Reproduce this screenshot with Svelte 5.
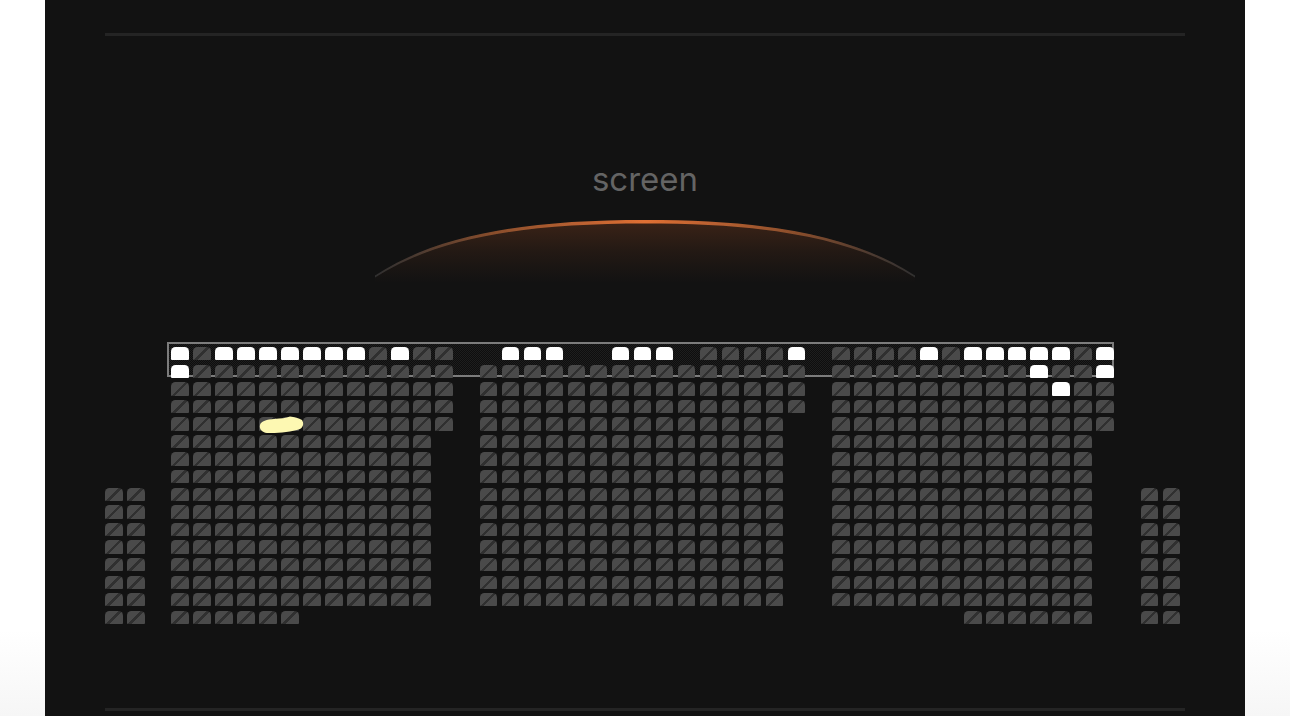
<script lang="ts">
  // s = taken (white), . = free (dark), _ = no seat
  function fill(ch: string, n: number) {
    return ch.repeat(n);
  }

  const side = Array(8).fill(fill(".", 2));

  const blockA = [
    "s.sssssss.s..",
    "s............",
    ".............",
    ".............",
    ".............",
    ...Array(10).fill(fill(".", 12) + "_"),
    fill(".", 6) + fill("_", 7),
  ];

  const blockB = [
    "_sss__sss_....s",
    ".".repeat(15),
    ".".repeat(15),
    ".".repeat(15),
    ...Array(11).fill(fill(".", 14) + "_"),
  ];

  const blockC = [
    "....s.sssss.s",
    ".........s..s",
    "..........s..",
    ".............",
    ".............",
    ...Array(10).fill(fill(".", 12) + "_"),
    fill("_", 6) + fill(".", 6) + "_",
  ];

  const blocks = [
    { rows: side, side: true },
    { rows: blockA, side: false },
    { rows: blockB, side: false },
    { rows: blockC, side: false },
    { rows: side, side: true },
  ];
</script>

<div class="page">
  <main class="panel">
    <hr class="rule" />

    <section class="screen">
      <h2>screen</h2>
      <svg class="arc" width="570" height="70" viewBox="0 0 570 70" aria-hidden="true">
        <defs>
          <linearGradient id="glow" x1="0" y1="0" x2="0" y2="1">
            <stop offset="0" stop-color="#e0672a" stop-opacity="0.2" />
            <stop offset="0.5" stop-color="#e0672a" stop-opacity="0.08" />
            <stop offset="1" stop-color="#e0672a" stop-opacity="0" />
          </linearGradient>
          <linearGradient id="edge" x1="0" y1="0" x2="1" y2="0">
            <stop offset="0" stop-color="#3c3c3c" stop-opacity="0.7" />
            <stop offset="0.08" stop-color="#4c3a30" />
            <stop offset="0.22" stop-color="#8a4e2c" />
            <stop offset="0.5" stop-color="#e07034" />
            <stop offset="0.78" stop-color="#8a4e2c" />
            <stop offset="0.92" stop-color="#4c3a30" />
            <stop offset="1" stop-color="#3c3c3c" stop-opacity="0.7" />
          </linearGradient>
          <filter id="soft" x="-5%" y="-20%" width="110%" height="140%">
            <feGaussianBlur stdDeviation="0.6" />
          </filter>
        </defs>
        <path d="M15 57 C80 14 170 2 285 2 C400 2 490 14 555 57 L555 64 L15 64 Z" fill="url(#glow)" />
        <path d="M15 56.500 C80 14 170 1 285 1 C400 1 490 14 555 56.500 L555 58.500 C490 17 400 4.500 285 4.500 C170 4.500 80 17 15 58.500 Z" fill="url(#edge)" filter="url(#soft)" />
      </svg>
    </section>

    <section class="map">
      <div class="selection"></div>
      {#each blocks as block}
        <div class="block" class:side={block.side}>
          {#each block.rows as row}
            <div class="row">
              {#each row.split("") as c}
                <span class="seat" class:taken={c === "s"} class:none={c === "_"}></span>
              {/each}
            </div>
          {/each}
        </div>
      {/each}
      <svg class="mark" width="45" height="18" viewBox="0 0 45 18" aria-hidden="true">
        <path d="M1 9 C2 5 8 3.500 15 3 C22 2.500 27 2 31 .5 C35 1 40 2 43 4 C45 7 44.500 11 41 13 C32 16 18 17.500 8 17 C3 16.500 0 13 1 9 Z" fill="#fdf8b2" />
      </svg>
    </section>

    <hr class="rule bottom" />
  </main>
</div>

<style>
  :global(body) {
    background: #fff;
  }

  .page {
    height: 716px;
    overflow: hidden;
    background: linear-gradient(180deg, #fff 88%, #f6f6f6 100%);
  }

  .panel {
    box-sizing: border-box;
    width: 1200px;
    height: 716px;
    margin: 0 auto;
    padding: 33px 60px 0;
    background: #121212;
    font-family: Inter, "Liberation Sans", sans-serif;
  }

  .rule {
    height: 3px;
    margin: 0;
    border: 0;
    background: #242424;
  }

  .rule.bottom {
    margin-top: 84px;
  }

  .screen {
    display: flex;
    flex-direction: column;
    align-items: center;
    padding-top: 122px;
  }

  .screen h2 {
    margin: 0;
    font-size: 33px;
    line-height: 42px;
    font-weight: 400;
    color: #646464;
  }

  .arc {
    display: block;
    margin-top: 19px;
  }

  .map {
    position: relative;
    display: flex;
    align-items: flex-start;
    gap: 26.65px;
    margin-top: 58px;
  }

  .block {
    position: relative;
    z-index: 1;
    display: flex;
    flex-direction: column;
    gap: 4.2px;
  }

  .block.side {
    align-self: flex-end;
  }

  .row {
    display: flex;
    gap: 4.43px;
  }

  .seat {
    width: 17.6px;
    height: 13.4px;
    border-radius: 4.5px 4.5px 1px 1px;
    background:
      linear-gradient(135deg, transparent 45%, #303030 45%, #303030 55%, transparent 55%),
      #4a4a4a;
  }

  .seat.taken {
    background: #fff;
  }

  .seat.none {
    visibility: hidden;
  }

  .selection {
    position: absolute;
    left: 62px;
    top: -5px;
    width: 947px;
    height: 35px;
    box-sizing: border-box;
    border: 2px solid #7c7c7c;
    background: repeating-conic-gradient(#1e1e1e 0 25%, #0e0e0e 0 50%) 0 0 / 2px 2px;
  }

  .mark {
    position: absolute;
    z-index: 2;
    left: 154px;
    top: 69px;
  }
</style>
